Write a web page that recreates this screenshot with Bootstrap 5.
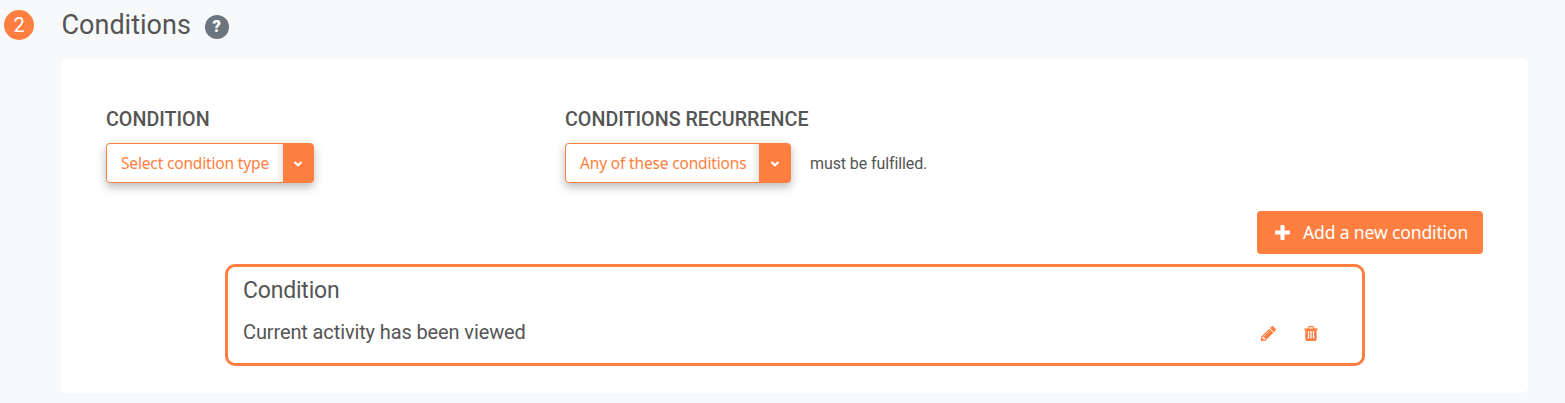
<!DOCTYPE html>
<html lang="en">
<head>
<meta charset="utf-8">
<meta name="viewport" content="width=device-width, initial-scale=1">
<title>Conditions</title>
<link href="https://cdn.jsdelivr.net/npm/bootstrap@5.3.0/dist/css/bootstrap.min.css" rel="stylesheet">
<style>
:root { --accent: #ff7f41; }
body { background: #f8f9fb; color: #555; font-family: Roboto, sans-serif; overflow: hidden; }
svg { display: block; fill: currentColor; flex: none; }
.page-head { height: 58px; padding: 10px 0 0 4px; }
.step { width: 30px; height: 30px; background: var(--accent); font-size: 20px; }
.title { font-size: 27px; line-height: 30px; margin: 0 14px 0 27.500px; letter-spacing: 0; font-weight: 400; }
.help { width: 24px; height: 24px; background: #6c757d; color: #fff; font-size: 16.500px; line-height: 24px; font-weight: 900; margin-top: 5px; }
.panel { margin: 0 37px 0 61px; height: 335px; border-radius: 6px; padding: 50px 45px 0; }
.col-first { width: 459px; }
.label { font-size: 19.700px; line-height: 24px; font-weight: 500; margin-bottom: 11px; text-transform: uppercase; }
.picker { height: 40px; border: 1px solid var(--accent); border-radius: 4px; box-shadow: 0 4px 10px rgba(0,0,0,.27); background: var(--accent); cursor: pointer; }
.picker-text { border-radius: 3px 0 0 3px; background: #fff linear-gradient(to left, #e8e8e8, #fff 7px); color: var(--accent); font: 15.500px/38px "Noto Sans", sans-serif; letter-spacing: -.16px; padding-left: 14px; }
.picker-type { width: 208px; }
.picker-rule { width: 226px; }
.caret { width: 31px; }
.picker-type .caret { width: 30px; }
.rule-note { font-size: 16px; letter-spacing: -.1px; margin: 2px 0 0 19px; }
.add-btn, .add-btn:hover { background: var(--accent); color: #fff; width: 226px; height: 43px; border: 0; border-radius: 4px; font: 17.500px/43px "Noto Sans", sans-serif; letter-spacing: -.13px; padding: 0 0 0 18px; margin: 28px 0 10px; }
.add-btn svg { margin-right: 13px; }
.condition-box { border: 3px solid var(--accent); border-radius: 10px; width: 1140px; height: 102px; margin-left: 119px; padding: 10px 44px 0 15px; }
.condition-name { font-size: 23px; line-height: 28px; font-weight: 400; letter-spacing: -.2px; margin: 0 0 13px; }
.condition-text { font-size: 20px; line-height: 28px; letter-spacing: -.12px; }
.actions { color: var(--accent); gap: 28px; margin-top: 3px; }
</style>
</head>
<body>
<header class="page-head d-flex align-items-start">
  <span class="step rounded-circle text-white d-flex align-items-center justify-content-center">2</span>
  <h1 class="title">Conditions</h1>
  <span class="help rounded-circle text-center">?</span>
</header>
<main class="panel bg-white">
  <div class="d-flex">
    <section class="col-first">
      <div class="label">Condition</div>
      <div class="picker picker-type d-flex">
        <span class="picker-text flex-grow-1 text-nowrap">Select condition type</span>
        <span class="caret d-flex align-items-center justify-content-center"><svg width="10" height="8" viewBox="0 0 10 8"><path d="M1.500 3 5 6.300l3.500-3.300" fill="none" stroke="#fff" stroke-width="2.200"/></svg></span>
      </div>
    </section>
    <section>
      <div class="label">Conditions recurrence</div>
      <div class="d-flex align-items-center">
        <div class="picker picker-rule d-flex">
          <span class="picker-text flex-grow-1 text-nowrap">Any of these conditions</span>
          <span class="caret d-flex align-items-center justify-content-center"><svg width="10" height="8" viewBox="0 0 10 8"><path d="M1.500 3 5 6.300l3.500-3.300" fill="none" stroke="#fff" stroke-width="2.200"/></svg></span>
        </div>
        <span class="rule-note">must be fulfilled.</span>
      </div>
    </section>
  </div>
  <div class="d-flex justify-content-end">
    <button type="button" class="btn add-btn d-flex align-items-center text-nowrap">
      <svg width="15" height="15" viewBox="192 128 1408 1408"><path d="M1600 736v192q0 40-28 68t-68 28h-416v416q0 40-28 68t-68 28h-192q-40 0-68-28t-28-68v-416h-416q-40 0-68-28t-28-68v-192q0-40 28-68t68-28h416v-416q0-40 28-68t68-28h192q40 0 68 28t28 68v416h416q40 0 68 28t28 68z"/></svg>
      <span>Add a new condition</span>
    </button>
  </div>
  <section class="condition-box">
    <h2 class="condition-name">Condition</h2>
    <div class="d-flex justify-content-between align-items-center">
      <span class="condition-text">Current activity has been viewed</span>
      <span class="actions d-flex">
        <svg width="15" height="15" viewBox="128 149 1515 1515"><path d="M491 1536l91-91-235-235-91 91v107h128v128h107zm523-928q0-22-22-22-10 0-17 7l-542 542q-7 7-7 17 0 22 22 22 10 0 17-7l542-542q7-7 7-17zm-54-192l416 416-832 832h-416v-416zm683 96q0 53-37 90l-166 166-416-416 166-165q36-38 90-38 53 0 91 38l235 234q37 39 37 91z"/></svg>
        <svg width="14" height="15" viewBox="192 128 1408 1536"><path d="M704 1376v-704q0-14-9-23t-23-9h-64q-14 0-23 9t-9 23v704q0 14 9 23t23 9h64q14 0 23-9t9-23zm256 0v-704q0-14-9-23t-23-9h-64q-14 0-23 9t-9 23v704q0 14 9 23t23 9h64q14 0 23-9t9-23zm256 0v-704q0-14-9-23t-23-9h-64q-14 0-23 9t-9 23v704q0 14 9 23t23 9h64q14 0 23-9t9-23zm-544-992h448l-48-117q-7-9-17-11h-317q-10 2-17 11zm928 32v64q0 14-9 23t-23 9h-96v948q0 83-47 143.500t-113 60.500h-832q-66 0-113-58.500t-47-141.500v-952h-96q-14 0-23-9t-9-23v-64q0-14 9-23t23-9h309l70-167q15-37 54-63t79-26h320q40 0 79 26t54 63l70 167h309q14 0 23 9t9 23z"/></svg>
      </span>
    </div>
  </section>
</main>
<script src="https://cdn.jsdelivr.net/npm/bootstrap@5.3.0/dist/js/bootstrap.bundle.min.js"></script>
</body>
</html>
